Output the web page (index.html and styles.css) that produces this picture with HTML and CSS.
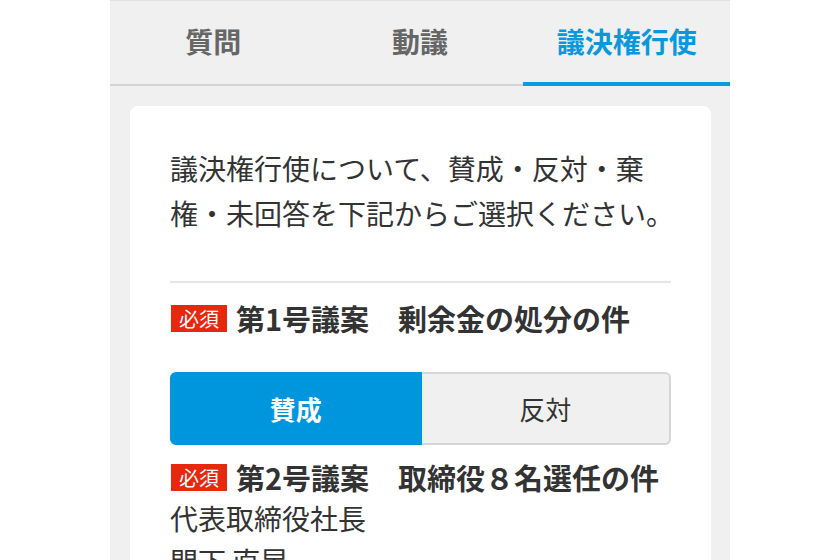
FILE: index.html
```html
<!DOCTYPE html>
<html lang="ja">
<head>
<meta charset="utf-8">
<title>議決権行使</title>
<link rel="stylesheet" href="styles.css">
</head>
<body>
<div class="app">
  <nav class="tabs">
    <div class="tab">質問</div>
    <div class="tab">動議</div>
    <div class="tab tab-active">議決権行使</div>
  </nav>
  <main class="card">
    <p class="intro">議決権行使について、賛成・反対・棄<br>権・未回答を下記からご選択ください。</p>
    <hr class="divider">
    <section class="item">
      <div class="item-head">
        <span class="badge">必須</span>
        <h2 class="item-title">第1号議案　剰余金の処分の件</h2>
      </div>
      <div class="choices">
        <button class="choice choice-on">賛成</button>
        <button class="choice">反対</button>
      </div>
    </section>
    <section class="item item-second">
      <div class="item-head">
        <span class="badge">必須</span>
        <h2 class="item-title">第2号議案　取締役８名選任の件</h2>
      </div>
      <p class="candidate">代表取締役社長<br>間下 直晃</p>
    </section>
  </main>
</div>
</body>
</html>
```

FILE: styles.css
```css
* { box-sizing: border-box; }

html, body {
  margin: 0;
  padding: 0;
  background: #ffffff;
  font-family: "Noto Sans CJK JP", "Noto Sans", sans-serif;
  color: #333333;
}

.app {
  width: 620px;
  margin: 0 auto;
  min-height: 560px;
  background: #f0f0f0;
  border-top: 1px solid #e2e2e2;
  overflow: hidden;
}

.tabs {
  display: flex;
  height: 85px;
  border-bottom: 2px solid #d4d4d4;
}

.tab {
  flex: 1;
  display: flex;
  align-items: center;
  justify-content: center;
  height: 83px;
  font-size: 28px;
  font-weight: 700;
  color: #666666;
  padding-bottom: 4px;
}

.tab-active {
  color: #0a98dc;
  height: 85px;
  margin-bottom: -2px;
  border-bottom: 4px solid #0a9be2;
  padding-bottom: 2px;
}

.card {
  margin: 20px 19px 0 20px;
  background: #ffffff;
  border-radius: 8px;
  padding: 40px 40px 40px 40px;
  min-height: 500px;
}

.intro {
  margin: 0;
  font-size: 28px;
  line-height: 45px;
  white-space: nowrap;
  color: #333333;
}

.divider {
  margin: 45px 0 0 0;
  border: 0;
  height: 2px;
  background: #e6e6e6;
}

.item {
  margin-top: 15px;
}

.item-second {
  margin-top: 12px;
}

.item-head {
  display: flex;
  align-items: center;
  height: 40px;
}

.badge {
  display: inline-block;
  height: 27px;
  line-height: 27px;
  padding: 0 8px;
  margin: 0 9px 0 1px;
  background: #e8270f;
  color: #ffffff;
  font-size: 20px;
  font-weight: 400;
}

.item-title {
  margin: 0;
  font-size: 29px;
  font-weight: 700;
  line-height: 40px;
  white-space: nowrap;
  color: #333333;
}

.choices {
  display: flex;
  margin-top: 34px;
  height: 73px;
}

.choice {
  flex: 1;
  font-family: inherit;
  font-size: 26px;
  color: #333333;
  background: #f0f0f0;
  border: 2px solid #d6d6d6;
  border-left: 0;
  border-radius: 0 6px 6px 0;
  margin: 0;
  padding: 0;
}

.choice-on {
  background: #0096de;
  border: 2px solid #0096de;
  border-radius: 6px 0 0 6px;
  color: #ffffff;
  font-weight: 700;
}

.candidate {
  margin: 0;
  font-size: 28px;
  line-height: 43px;
  color: #333333;
}
```
